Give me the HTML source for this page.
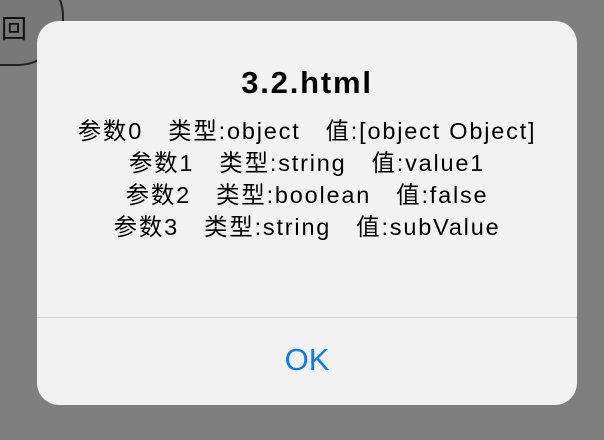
<html><head><style>
body{margin:0;width:604px;height:440px;background:#7f7f7f;position:relative;overflow:hidden;font-family:"Liberation Sans","Noto Sans CJK SC",sans-serif}
.btn{position:absolute;left:-40px;top:-30px;width:100px;height:92px;border:2px solid #222;border-radius:0 46px 46px 0;background:#787878}
.hui{position:absolute;left:1px;top:14px;font-size:26px;color:#111;line-height:30px}
.dlg{position:absolute;left:37px;top:21px;width:540px;height:384px;background:#f2f2f2;border-radius:22px}
.t{position:absolute;top:44px;width:100%;text-align:center;font-weight:bold;font-size:31px;letter-spacing:1.8px;color:#000}
.b{position:absolute;top:94px;width:100%;text-align:center;font-size:23.5px;letter-spacing:1.8px;line-height:32px;color:#000;white-space:pre}
.sep{position:absolute;top:296px;width:100%;height:1px;background:#d6d6d6}
.ok{position:absolute;top:321px;width:100%;text-align:center;font-size:31px;color:#0a7aff}
</style></head><body>
<div class="btn"></div><div class="hui">回</div>
<div class="dlg">
<div class="t">3.2.html</div>
<div class="b">参数0   类型:object   值:[object Object]
参数1   类型:string   值:value1
参数2   类型:boolean   值:false
参数3   类型:string   值:subValue</div>
<div class="sep"></div>
<div class="ok">OK</div>
</div>
</body></html>
